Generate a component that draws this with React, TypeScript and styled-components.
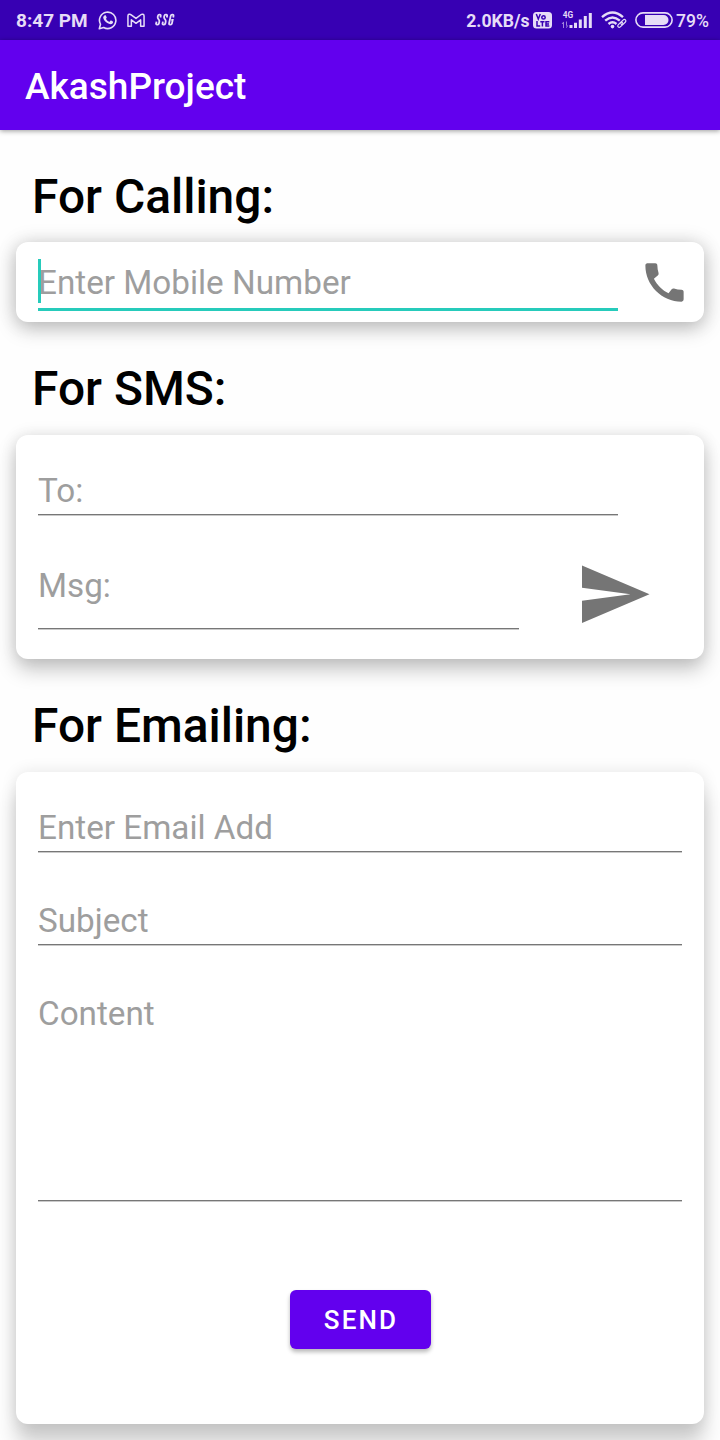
import React from 'react';
import styled, { createGlobalStyle } from 'styled-components';

const GlobalStyle = createGlobalStyle`
  * { box-sizing: border-box; }
  html, body { margin: 0; background: #fefefe; }
  body { font-family: Roboto, "Liberation Sans", sans-serif; }
  input, textarea, button { font-family: inherit; margin: 0; }
`;

const Screen = styled.div`
  width: 720px;
  height: 1440px;
  overflow: hidden;
  background: #fefefe;
`;

const StatusBar = styled.header`
  display: flex;
  align-items: center;
  justify-content: space-between;
  height: 40px;
  padding: 0 11px 0 16px;
  background: #3700b3;
  color: #e6dcf7;
`;

const StatusGroup = styled.div`
  display: flex;
  align-items: center;
  height: 40px;
`;

const StatusText = styled.span<{ $size?: number; $weight?: number; $left?: number }>`
  margin-left: ${p => p.$left ?? 0}px;
  font-size: ${p => p.$size ?? 19}px;
  font-weight: ${p => p.$weight ?? 700};
  line-height: 40px;
  padding-top: 1px;
  white-space: nowrap;
`;

const StatusIcon = styled.svg<{ $left?: number }>`
  display: block;
  flex: none;
  margin-left: ${p => p.$left ?? 0}px;
`;

const AppBar = styled.div`
  position: relative;
  display: flex;
  align-items: center;
  height: 90px;
  padding: 4px 25px 0;
  background: #6200ee;
  box-shadow: 0 1px 5px rgba(0, 0, 0, 0.4);
`;

const AppTitle = styled.h1`
  margin: 0;
  color: #fff;
  font-size: 37px;
  font-weight: 500;
  line-height: 44px;
`;

const Content = styled.main`
  padding: 0 16px;
`;

const SectionTitle = styled.h2<{ $height: number }>`
  height: ${p => p.$height}px;
  margin: 0;
  padding: 39px 0 0 16px;
  color: #000;
  font-size: 47.9px;
  font-weight: 500;
  line-height: 56px;
`;

const Card = styled.section<{ $height: number; $shadow: string }>`
  height: ${p => p.$height}px;
  padding: 0 22px;
  border-radius: 12px;
  background: #fff;
  box-shadow: ${p => p.$shadow};
`;

const Row = styled.div`
  display: flex;
`;

const Field = styled.div<{ $width: number; $height: number; $top: number; $active?: boolean }>`
  position: relative;
  flex: none;
  width: ${p => p.$width}px;
  height: ${p => p.$height}px;
  padding-top: ${p => p.$top}px;
  border-bottom: ${p => (p.$active ? '3px solid #26cbbb' : '1px solid #777')};
  box-shadow: ${p => (p.$active ? 'none' : '0 1px 0 #cacaca')};
`;

const Input = styled.input`
  display: block;
  width: 100%;
  height: 44px;
  padding: 0;
  border: 0;
  outline: 0;
  background: transparent;
  font-size: 33.25px;
  line-height: 44px;
  &::placeholder { color: #9e9e9e; opacity: 1; }
`;

const Caret = styled.span`
  position: absolute;
  left: 0;
  top: 17px;
  width: 3px;
  height: 44px;
  background: #26cbbb;
`;

const IconButton = styled.button<{ $left: number; $top: number }>`
  display: block;
  flex: none;
  align-self: flex-start;
  margin: ${p => p.$top}px 0 0 ${p => p.$left}px;
  padding: 0;
  border: 0;
  background: none;
  color: #757575;
  svg { display: block; }
`;

const SendButton = styled.button`
  display: block;
  width: 141px;
  height: 59px;
  margin: 89px auto 0;
  padding: 1px 0 0 2px;
  border: 0;
  border-radius: 6px;
  background: #6200ee;
  box-shadow: 0 3px 4px rgba(0, 0, 0, 0.28);
  color: #fff;
  font-size: 26px;
  font-weight: 500;
  letter-spacing: 2.1px;
`;

const shadowNear = '0 7px 20px rgba(0,0,0,.22), 0 0 20px rgba(0,0,0,.13)';
const shadowMid = '0 11px 20px rgba(0,0,0,.22), 0 0 16px rgba(0,0,0,.10)';
const shadowFar = '0 20px 20px rgba(0,0,0,.19), 0 0 16px rgba(0,0,0,.10)';

export default function App() {
  return (
    <Screen>
      <GlobalStyle />
      <StatusBar>
        <StatusGroup>
          <StatusText>8:47 PM</StatusText>
          <StatusIcon $left={10} width="20" height="20" viewBox="0 0 20 20" fill="none" stroke="currentColor">
            <path d="M1.3 18.7 2.5 14.3A8.2 8.2 0 1 1 5.7 17.5Z" strokeWidth="1.6" strokeLinejoin="round" />
            <path fill="currentColor" stroke="none" d="M7.1 5.3c.4-.1.7 0 .9.5l.7 1.6c.1.4-.5 1-.8 1.4.8 1.5 1.9 2.5 3.4 3.1l1.1-1.2c.3-.3.5-.2.8-.1l1.7.9c.4.3.2 1.3-.2 1.8-1.4 1.5-3.5.9-5.4-.2-2-1.2-3.8-3.3-4.1-5.3-.1-1.1.8-2.3 1.900-2.500Z" />
          </StatusIcon>
          <StatusIcon $left={9.5} width="18" height="15" viewBox="0 0 19 16" preserveAspectRatio="none" fill="none" stroke="currentColor" strokeWidth="1.6" strokeLinejoin="round">
            <path d="M1 3.200V14h3.600V7.300L9.500 11l4.900-3.700V14H18V3.200C18 1.300 16 .8 14.600 1.900L9.500 5.800 4.400 1.900C3 .8 1 1.300 1 3.200Z" />
          </StatusIcon>
          <StatusIcon $left={10} width="20" height="14" viewBox="0 0 20 14" fill="none" stroke="currentColor" strokeWidth="1.800">
            <path d="M5.400 4.500 5.700 3Q6 1.700 4.800 1.700H4.300Q3.200 1.700 2.900 2.900L2.700 4Q2.500 5 3.200 5.800L3.900 6.700Q4.500 7.500 4.300 8.500L4 10.300Q3.700 11.600 2.700 11.600H2Q.9 11.600 1.200 10.300L1.500 8.700" />
            <path transform="translate(6.400 0)" d="M5.400 4.500 5.700 3Q6 1.700 4.800 1.700H4.300Q3.200 1.700 2.900 2.900L2.700 4Q2.500 5 3.200 5.800L3.900 6.700Q4.500 7.500 4.300 8.500L4 10.300Q3.700 11.600 2.700 11.600H2Q.9 11.600 1.200 10.300L1.500 8.700" />
            <path transform="translate(12.800 0)" d="M5.400 4.500 5.700 3Q6 1.700 4.800 1.700H4.300Q3.200 1.700 2.900 2.900L1.300 10.300Q1 11.600 2.200 11.600H2.800Q3.900 11.600 4.200 10.300L4.900 7H3.500" />
          </StatusIcon>
        </StatusGroup>
        <StatusGroup>
          <StatusText $size={17.6}>2.0KB/s</StatusText>
          <StatusIcon $left={3} width="19" height="17" viewBox="0 0 19 17">
            <rect width="19" height="16.500" rx="3.500" fill="currentColor" />
            <g fill="none" stroke="#3700b3" strokeWidth="1.500">
              <path d="M3.300 2 5.300 7 7.300 2M4 9v5h3.200M7.300 9.700h4.200M9.400 9.700V14.500M16.300 9.700H13V14h3.300M13 11.900h3" />
              <circle cx="10.500" cy="5.400" r="1.700" />
            </g>
          </StatusIcon>
          <StatusIcon $left={9} width="32" height="20" viewBox="0 0 32 20" fill="currentColor">
            <text x="1.800" y="7.500" fontSize="8.300" fontWeight="700" fontFamily="Roboto, sans-serif">4G</text>
            <path opacity=".6" d="M2 12h1v6H2ZM.6 14 2.500 11.500V14ZM5 11.500h1V18H5ZM5.500 18 7.300 15.500H5.500Z" />
            <path d="M8.500 15h3v3h-3ZM13 12.800h3V18h-3ZM17.800 9.500h3V18h-3ZM22.800 6h3v12h-3ZM27.800 3h3v15h-3Z" />
          </StatusIcon>
          <StatusIcon $left={8} width="27" height="18" viewBox="0 0 27 18" fill="none" stroke="currentColor">
            <path strokeWidth="2.400" d="M1 6.200Q11.500-3 22 6.200M4.200 9.700Q11.500 3.300 18.800 9.700M7.500 13Q11.500 9.700 15.500 13" />
            <circle cx="11.500" cy="15.600" r="1.800" fill="currentColor" stroke="none" />
            <g strokeWidth="1.200">
              <rect x="-3" y="-1.500" width="6" height="3" rx="1.500" transform="translate(19.300 13.800) rotate(-45)" />
              <rect x="-3" y="-1.500" width="6" height="3" rx="1.500" transform="translate(22.300 11) rotate(-45)" />
            </g>
          </StatusIcon>
          <StatusIcon $left={7} width="38" height="16" viewBox="0 0 38 16">
            <rect x=".9" y=".9" width="36.200" height="14.200" rx="7.100" fill="none" stroke="currentColor" strokeWidth="1.600" />
            <path d="M10 3h18.500a5 5 0 0 1 0 10H10Z" fill="currentColor" />
          </StatusIcon>
          <StatusText $size={17.6} $weight={500} $left={3.5}>79%</StatusText>
        </StatusGroup>
      </StatusBar>
      <AppBar>
        <AppTitle>AkashProject</AppTitle>
      </AppBar>
      <Content>
        <SectionTitle $height={112}>For Calling:</SectionTitle>
        <Card $height={80} $shadow={shadowNear}>
          <Row>
            <Field $width={580} $height={69} $top={19} $active>
              <Input type="tel" placeholder="Enter Mobile Number" />
              <Caret />
            </Field>
            <IconButton $left={21} $top={14.5} aria-label="Call">
              <svg width="51" height="51" viewBox="0 0 24 24" fill="currentColor">
                <path d="M20.010 15.380c-1.230 0-2.420-.2-3.530-.56-.35-.12-.74-.03-1.010.24l-1.570 1.970c-2.830-1.350-5.480-3.900-6.890-6.830l1.950-1.660c.27-.28.350-.67.240-1.020-.37-1.110-.56-2.300-.56-3.530 0-.54-.45-.99-.99-.99H4.190C3.650 3 3 3.240 3 3.990 3 13.280 10.730 21 20.010 21c.71 0 .99-.63.99-1.180v-3.450c0-.54-.45-.99-.99-.99z" />
              </svg>
            </IconButton>
          </Row>
        </Card>
        <SectionTitle $height={113}>For SMS:</SectionTitle>
        <Card $height={224} $shadow={shadowMid}>
          <Field $width={580} $height={80} $top={34}>
            <Input placeholder="To:" />
          </Field>
          <Row>
            <Field $width={481} $height={114} $top={49}>
              <Input placeholder="Msg:" />
            </Field>
            <IconButton $left={57} $top={39} aria-label="Send message">
              <svg width="80" height="80" viewBox="0 0 80 80" fill="currentColor">
                <path d="M6 11.500 73.500 40.200 6 69V46.700L54.500 40.200 6 33.700Z" />
              </svg>
            </IconButton>
          </Row>
        </Card>
        <SectionTitle $height={113}>For Emailing:</SectionTitle>
        <Card $height={652} $shadow={shadowFar}>
          <Field $width={644} $height={80} $top={34}>
            <Input type="email" placeholder="Enter Email Add" />
          </Field>
          <Field $width={644} $height={93} $top={47}>
            <Input placeholder="Subject" />
          </Field>
          <Field $width={644} $height={256} $top={47}>
            <Input placeholder="Content" />
          </Field>
          <SendButton>SEND</SendButton>
        </Card>
      </Content>
    </Screen>
  );
}
